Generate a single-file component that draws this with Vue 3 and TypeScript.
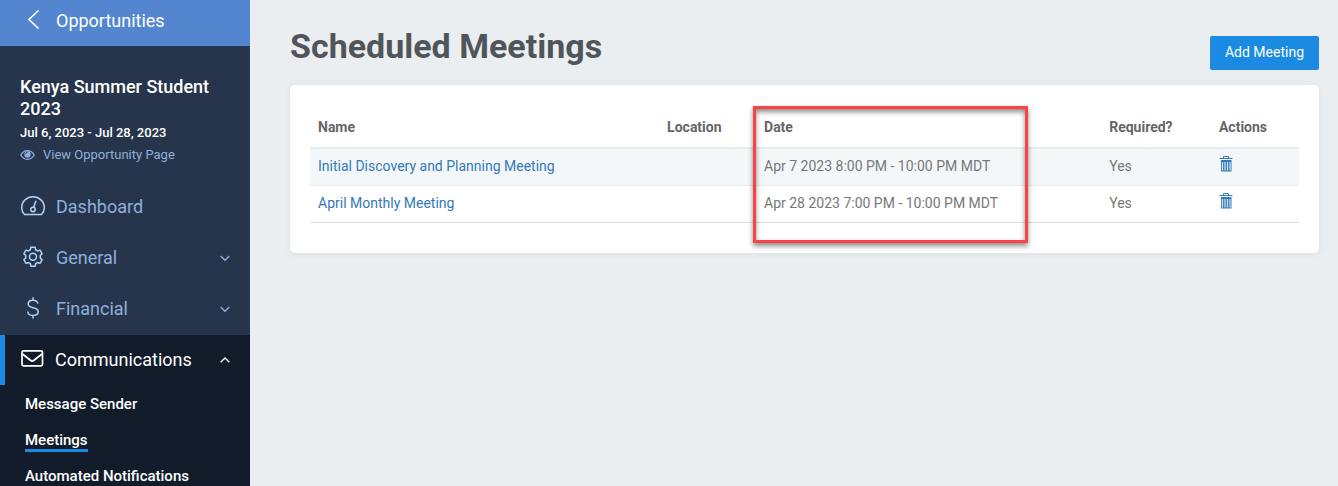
<script setup lang="ts">
import { ref } from 'vue'

interface Meeting {
  name: string
  location: string
  date: string
  required: boolean
}

interface NavItem {
  label: string
  icon: 'gauge' | 'gear' | 'dollar'
  expandable: boolean
}

const navItems: NavItem[] = [
  { label: 'Dashboard', icon: 'gauge', expandable: false },
  { label: 'General', icon: 'gear', expandable: true },
  { label: 'Financial', icon: 'dollar', expandable: true },
]

const subItems = ['Message Sender', 'Meetings', 'Automated Notifications']
const activeSub = ref('Meetings')
const communicationsOpen = ref(true)

const meetings = ref<Meeting[]>([
  {
    name: 'Initial Discovery and Planning Meeting',
    location: '',
    date: 'Apr 7 2023 8:00 PM - 10:00 PM MDT',
    required: true,
  },
  {
    name: 'April Monthly Meeting',
    location: '',
    date: 'Apr 28 2023 7:00 PM - 10:00 PM MDT',
    required: true,
  },
])

function removeMeeting(index: number) {
  meetings.value.splice(index, 1)
}
</script>

<template>
  <div class="layout">
    <aside class="sidebar">
      <a class="back" href="#">
        <svg class="icon" viewBox="0 0 26 26" aria-hidden="true">
          <path d="M18.500 2.500 9 11.500l9.500 9" stroke-width="1.700" />
        </svg>
        <span>Opportunities</span>
      </a>

      <div class="summary">
        <h2>Kenya Summer Student 2023</h2>
        <p class="dates">Jul 6, 2023 - Jul 28, 2023</p>
        <a class="view" href="#">
          <svg class="eye" viewBox="0 0 15 12" aria-hidden="true">
            <path d="M.8 6C2.4 3.2 4.8 1.7 7.5 1.7S12.6 3.2 14.2 6C12.6 8.8 10.2 10.3 7.5 10.3S2.4 8.800.8 6Z" fill="none" stroke="currentColor" stroke-width="1.3" />
            <circle cx="7.5" cy="5.4" r="3.2" fill="currentColor" />
            <path d="M5.500 5.200a2 2 0 0 1 2-2" fill="none" stroke="#26354b" stroke-width=".8" />
          </svg>
          <span>View Opportunity Page</span>
        </a>
      </div>

      <nav>
        <a v-for="item in navItems" :key="item.label" class="item" href="#">
          <svg v-if="item.icon === 'gauge'" class="icon" viewBox="0 0 26 26" aria-hidden="true">
            <path d="M4.500 20.500C2.600 18.600 1.700 16.300 1.700 13.700 1.700 7.500 6.800 2.700 13 2.700s11.300 4.800 11.300 11c0 2.600-.9 4.900-2.800 6.800Z" />
            <circle cx="13" cy="15.500" r="2.200" />
            <path d="m13.700 13.300 2.300-6.500" />
          </svg>
          <svg v-else-if="item.icon === 'gear'" class="icon" viewBox="0 0 26 26" aria-hidden="true">
            <path d="M10.800 2.300h4.400l.4 2.500q1 .4 1.900 1.200l2.500-.9 2.200 3.700-1.900 1.600v2.700l1.900 1.600-2.200 3.700-2.500-.9q-.9.800-1.900 1.200l-.4 2.500h-4.400l-.4-2.500q-1-.4-1.900-1.200l-2.500.9-2.200-3.700 1.900-1.600v-2.700l-1.900-1.600 2.200-3.700 2.500.9q.9-.8 1.900-1.200Z" stroke-linejoin="round" />
            <circle cx="13" cy="11.800" r="3.500" />
          </svg>
          <svg v-else class="icon" viewBox="0 0 26 26" aria-hidden="true">
            <path d="M18 7.500C17.400 5.200 15.600 4.200 13 4.200c-2.900 0-4.800 1.500-4.800 3.700 0 5.200 10 2.400 10 7.700 0 2.400-2 3.900-5.200 3.900-3 0-5-1.400-5.300-4M13 1.300v2.900m0 15.300v2.900" />
          </svg>
          <span class="label">{{ item.label }}</span>
          <svg v-if="item.expandable" class="caret" viewBox="0 0 10 10" aria-hidden="true">
            <path d="m.7 3 4.300 4.200L9.300 3" />
          </svg>
        </a>

        <button
          class="item current"
          type="button"
          :aria-expanded="communicationsOpen"
          @click="communicationsOpen = !communicationsOpen"
        >
          <svg class="icon" viewBox="0 0 26 26" aria-hidden="true">
            <rect x="3" y="3.800" width="20.500" height="15" rx="1.500" stroke-width="1.700" />
            <path d="m3.500 7 8.300 6.500q1.450 1.200 2.900 0L23 7" stroke-width="1.700" />
          </svg>
          <span class="label">Communications</span>
          <svg class="caret" viewBox="0 0 10 10" aria-hidden="true">
            <path d="M.7 7.200 5 3l4.300 4.200" />
          </svg>
        </button>
        <ul v-if="communicationsOpen" class="sub">
          <li v-for="sub in subItems" :key="sub">
            <a href="#" :class="{ active: sub === activeSub }" @click.prevent="activeSub = sub">{{ sub }}</a>
          </li>
        </ul>
      </nav>
    </aside>

    <main class="content">
      <header class="heading">
        <h1>Scheduled Meetings</h1>
        <button class="add" type="button">Add Meeting</button>
      </header>

      <section class="card">
        <table>
          <colgroup>
            <col class="c-name" />
            <col class="c-location" />
            <col class="c-date" />
            <col class="c-required" />
            <col class="c-actions" />
          </colgroup>
          <thead>
            <tr>
              <th scope="col">Name</th>
              <th scope="col">Location</th>
              <th scope="col" class="marked">Date</th>
              <th scope="col">Required?</th>
              <th scope="col">Actions</th>
            </tr>
          </thead>
          <tbody>
            <tr v-for="(meeting, index) in meetings" :key="meeting.name">
              <td><a href="#">{{ meeting.name }}</a></td>
              <td>{{ meeting.location }}</td>
              <td>{{ meeting.date }}</td>
              <td>{{ meeting.required ? 'Yes' : 'No' }}</td>
              <td>
                <button class="trash" type="button" :aria-label="`Delete ${meeting.name}`" @click="removeMeeting(index)">
                  <svg viewBox="0 0 14 16" aria-hidden="true">
                    <path d="M4.500 2.500v-2h5v2M.5 2.500h13" fill="none" stroke="currentColor" />
                    <path d="M2 4h10.500v11.500H2Z" fill="currentColor" />
                    <path d="M3.500 6v8.500m2.500-8.500v8.500m2.500-8.500v8.500m2.500-8.500v8.500" fill="none" stroke="#d5e5f4" stroke-width="1.200" />
                  </svg>
                </button>
              </td>
            </tr>
          </tbody>
        </table>
      </section>
    </main>
  </div>
</template>

<style>
body {
  margin: 0;
  background: #eaeef1;
}
</style>

<style scoped>
.layout {
  display: flex;
  height: 100vh;
  overflow: hidden;
  font-family: Roboto, "Liberation Sans", sans-serif;
  font-size: 14px;
  line-height: 20px;
  color: #777;
}

a {
  color: #337ab7;
  text-decoration: none;
}

button {
  font: inherit;
  border: 0;
  cursor: pointer;
}

.sidebar {
  flex: 0 0 250px;
  display: flex;
  flex-direction: column;
  background: #26354b;
  color: #fff;
}

.back {
  display: flex;
  flex: none;
  align-items: center;
  gap: 10px;
  height: 46px;
  padding: 0 20px 4px;
  box-sizing: border-box;
  background: #5386cf;
  color: #fff;
  font-size: 18px;
}

.icon {
  flex: none;
  width: 26px;
  height: 26px;
  fill: none;
  stroke: currentColor;
  stroke-width: 1.5;
}

.summary {
  padding: 30px 20px 17px;
}

.summary h2 {
  margin: 0;
  font-size: 18px;
  font-weight: 500;
  line-height: 22px;
}

.dates {
  margin: 3px 0 2px;
  font-size: 13px;
  font-weight: 500;
}

.view {
  display: flex;
  align-items: center;
  gap: 8px;
  color: #8fb0dc;
  font-size: 13px;
}

.eye {
  width: 15px;
  height: 12px;
}

nav {
  display: flex;
  flex: 1;
  flex-direction: column;
}

.item {
  display: flex;
  flex: none;
  align-items: center;
  gap: 10px;
  height: 50px;
  margin-bottom: 1px;
  padding: 0 20px;
  box-sizing: border-box;
  color: #8fb0dc;
  font-size: 18px;
  text-align: left;
}

.item .icon {
  color: #b4d2f7;
}

.label {
  flex: 1;
}

.caret {
  width: 10px;
  height: 10px;
  fill: none;
  stroke: currentColor;
  stroke-width: 1.4;
}

.current {
  margin-bottom: 0;
  padding-left: 14px;
  border-left: 5px solid #1a8ae2;
  background: #111b2a;
  color: #fff;
}

.current .icon {
  color: #fff;
}

.sub {
  flex: 1;
  margin: 0;
  padding: 1px 0 0 25px;
  list-style: none;
  background: #111b2a;
}

.sub li {
  display: flex;
  align-items: center;
  height: 36px;
}

.sub a {
  border-top: 3px solid transparent;
  border-bottom: 3px solid transparent;
  color: #fff;
  font-size: 15px;
  font-weight: 500;
  line-height: 18px;
}

.sub .active {
  border-bottom-color: #1a8ae2;
}

.content {
  flex: 1;
  min-width: 0;
  padding: 26px 19px 0 40px;
}

.heading {
  display: flex;
  justify-content: space-between;
  align-items: flex-end;
  margin-bottom: 15px;
}

h1 {
  margin: 0 0 4px;
  color: #50555a;
  font-size: 34px;
  font-weight: 700;
  line-height: 40px;
}

.add {
  height: 34px;
  padding: 0 15px 2px;
  border-radius: 2px;
  background: #1a8ae2;
  color: #fff;
}

.card {
  padding: 20px 20px 30px;
  border-radius: 5px;
  background: #fff;
  box-shadow: 0 1px 8px rgba(0, 0, 0, 0.06);
}

table {
  width: 100%;
  table-layout: fixed;
  border-collapse: separate;
  border-spacing: 0;
  border-bottom: 1px solid #dcdfe2;
}

.c-name { width: 35.3%; }
.c-location { width: 9.8%; }
.c-date { width: 34.9%; }
.c-required { width: 11.1%; }
.c-actions { width: 8.9%; }

th,
td {
  padding: 7px 8px 9px;
  text-align: left;
}

th {
  height: 40px;
  padding: 2px 8px 0;
  border-bottom: 2px solid #e8edf0;
  color: #666;
  font-weight: 700;
}

td {
  height: 20px;
  white-space: nowrap;
}

tbody tr:nth-child(odd) td {
  border-bottom: 1px solid #e8edf0;
  background: #f4f7fa;
}

.marked {
  position: relative;
}

.marked::after {
  position: absolute;
  z-index: 1;
  top: 1px;
  left: -3px;
  width: 275px;
  height: 137px;
  box-sizing: border-box;
  border: 3px solid #fb4346;
  box-shadow: 0 3px 5px rgba(0, 0, 0, 0.45), inset 0 3px 5px rgba(0, 0, 0, 0.45);
  content: "";
  pointer-events: none;
}

.trash {
  display: block;
  height: 20px;
  padding: 0 0 4px;
  background: none;
  color: #337ab7;
}

.trash svg {
  display: block;
  width: 14px;
  height: 16px;
}
</style>
